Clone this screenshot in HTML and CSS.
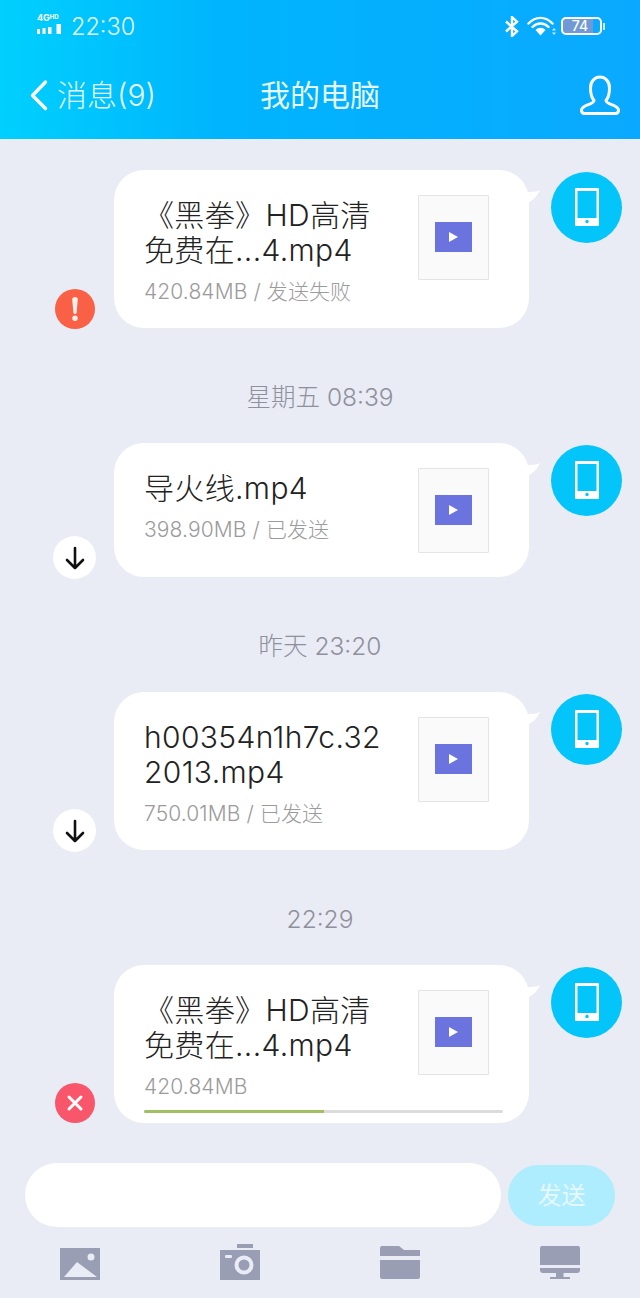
FILE: index.html
```html
<!DOCTYPE html>
<html lang="zh">
<head>
<meta charset="utf-8">
<title>我的电脑</title>
<link rel="stylesheet" href="styles.css">
</head>
<body>
<div class="app">
  <header class="header">
    <div class="statusbar">
      <div class="status-left">
        <div class="signal">
          <div class="net"><span class="net-4g">4G</span><span class="net-hd">HD</span></div>
          <svg class="bars" width="25" height="10" viewBox="0 0 25 10"><path fill="#fff" d="M0 5h3v5H0zM5.500 4h3v6h-3zM11 3h3.500v7H11zM19.500 0H24v10h-4.500z"/></svg>
        </div>
        <span class="clock">22:30</span>
      </div>
      <div class="status-right">
        <svg class="bt" width="14" height="21" viewBox="0 0 14 21"><path fill="none" stroke="#fff" stroke-width="2.400" d="M1 5.500l11 9.800L7 20V1l5 4.700L1 15.500"/></svg>
        <svg class="wifi" width="29" height="20" viewBox="0 0 29 20"><path fill="none" stroke="#fff" stroke-width="2.400" stroke-linecap="round" d="M1.500 7.500C8.500 0 18.500 0 25.500 7.500M5.500 11C10 6.300 17 6.300 21.500 11"/><path fill="#fff" d="M8.500 14c3-3 7-3 10 0l-5 5.500z"/><path fill="#fff" d="M27 12l2 2.500h-4zM27 19l-2-2.500h4z" opacity=".8"/></svg>
        <div class="battery"><div class="battery-body"><span class="battery-level">74</span></div><span class="battery-nub"></span></div>
      </div>
    </div>
    <nav class="navbar">
      <div class="nav-back">
        <svg width="20" height="32" viewBox="0 0 20 32"><path fill="none" stroke="#fff" stroke-width="3.400" stroke-linecap="round" stroke-linejoin="round" d="M15.500 3L2.500 16.500l13 13"/></svg>
        <span>消息(9)</span>
      </div>
      <div class="nav-title">我的电脑</div>
      <svg class="nav-user" width="40" height="40" viewBox="0 0 40 40"><path fill="none" stroke="#fff" stroke-width="3" stroke-linejoin="round" d="M14 25.500C11 22 10.500 17 10.500 13 10.500 6 15 2 20 2s9.500 4 9.500 11c0 4-.5 9-3.500 12.500 0 4 12.500 4.500 12.500 9.500 0 2-1 3.500-3 3.500H4.500c-2 0-3-1.500-3-3.500 0-5 12.500-5.500 12.500-9.500z"/></svg>
    </nav>
  </header>

  <main class="messages">
    <section class="row">
      <div class="status-slot"><div class="badge badge-alert"><svg width="6" height="24" viewBox="0 0 6 24"><path fill="#fff" opacity=".9" d="M.2 2.500a2.800 2.500 0 0 1 5.600 0L4.600 15.500a1.600 1.600 0 0 1-3.200 0zM3 18.500a2.700 2.700 0 1 0 0 5.400 2.700 2.700 0 0 0 0-5.400z"/></svg></div></div>
      <article class="bubble">
        <div class="bubble-main">
          <div class="file-text">
            <div class="file-name">《黑拳》HD高清<br>免费在...4.mp4</div>
            <div class="file-meta">420.84MB / 发送失败</div>
          </div>
          <div class="thumb"><div class="thumb-play"></div></div>
        </div>
        <svg class="tail" width="14" height="16" viewBox="0 0 14 16"><path fill="#fff" d="M0 3c4 0 9 0 13-2C11 6 6 12 0 14z"/></svg>
      </article>
      <div class="avatar"><svg width="24" height="38" viewBox="0 0 24 38"><path fill="#fff" fill-rule="evenodd" d="M1 0h22a1 1 0 0 1 1 1v36a1 1 0 0 1-1 1H1a1 1 0 0 1-1-1V1a1 1 0 0 1 1-1zm1.500 3v27h19V3zM12 31.800a1.700 1.700 0 1 0 0 3.400 1.700 1.700 0 0 0 0-3.400z"/></svg></div>
    </section>

    <div class="time">星期五 08:39</div>

    <section class="row">
      <div class="status-slot"><div class="badge badge-down"><svg width="22" height="24" viewBox="0 0 22 24"><path fill="none" stroke="#111" stroke-width="2.600" stroke-linecap="round" stroke-linejoin="round" d="M11 2v20M3 14l8 8 8-8"/></svg></div></div>
      <article class="bubble">
        <div class="bubble-main">
          <div class="file-text">
            <div class="file-name">导火线.mp4</div>
            <div class="file-meta">398.90MB / 已发送</div>
          </div>
          <div class="thumb"><div class="thumb-play"></div></div>
        </div>
        <svg class="tail" width="14" height="16" viewBox="0 0 14 16"><path fill="#fff" d="M0 3c4 0 9 0 13-2C11 6 6 12 0 14z"/></svg>
      </article>
      <div class="avatar"><svg width="24" height="38" viewBox="0 0 24 38"><path fill="#fff" fill-rule="evenodd" d="M1 0h22a1 1 0 0 1 1 1v36a1 1 0 0 1-1 1H1a1 1 0 0 1-1-1V1a1 1 0 0 1 1-1zm1.500 3v27h19V3zM12 31.800a1.700 1.700 0 1 0 0 3.400 1.700 1.700 0 0 0 0-3.400z"/></svg></div>
    </section>

    <div class="time">昨天 23:20</div>

    <section class="row">
      <div class="status-slot"><div class="badge badge-down"><svg width="22" height="24" viewBox="0 0 22 24"><path fill="none" stroke="#111" stroke-width="2.600" stroke-linecap="round" stroke-linejoin="round" d="M11 2v20M3 14l8 8 8-8"/></svg></div></div>
      <article class="bubble">
        <div class="bubble-main">
          <div class="file-text">
            <div class="file-name">h00354n1h7c.32<br>2013.mp4</div>
            <div class="file-meta">750.01MB / 已发送</div>
          </div>
          <div class="thumb"><div class="thumb-play"></div></div>
        </div>
        <svg class="tail" width="14" height="16" viewBox="0 0 14 16"><path fill="#fff" d="M0 3c4 0 9 0 13-2C11 6 6 12 0 14z"/></svg>
      </article>
      <div class="avatar"><svg width="24" height="38" viewBox="0 0 24 38"><path fill="#fff" fill-rule="evenodd" d="M1 0h22a1 1 0 0 1 1 1v36a1 1 0 0 1-1 1H1a1 1 0 0 1-1-1V1a1 1 0 0 1 1-1zm1.500 3v27h19V3zM12 31.800a1.700 1.700 0 1 0 0 3.400 1.700 1.700 0 0 0 0-3.400z"/></svg></div>
    </section>

    <div class="time">22:29</div>

    <section class="row">
      <div class="status-slot"><div class="badge badge-cancel"><svg width="18" height="18" viewBox="0 0 18 18"><path fill="none" stroke="#fff" stroke-width="3" stroke-linecap="round" d="M3 3l12 12M15 3L3 15"/></svg></div></div>
      <article class="bubble bubble-progress">
        <div class="bubble-main">
          <div class="file-text">
            <div class="file-name">《黑拳》HD高清<br>免费在...4.mp4</div>
            <div class="file-meta">420.84MB</div>
          </div>
          <div class="thumb"><div class="thumb-play"></div></div>
        </div>
        <div class="progress"><div class="progress-fill" style="width:50%"></div></div>
        <svg class="tail" width="14" height="16" viewBox="0 0 14 16"><path fill="#fff" d="M0 3c4 0 9 0 13-2C11 6 6 12 0 14z"/></svg>
      </article>
      <div class="avatar"><svg width="24" height="38" viewBox="0 0 24 38"><path fill="#fff" fill-rule="evenodd" d="M1 0h22a1 1 0 0 1 1 1v36a1 1 0 0 1-1 1H1a1 1 0 0 1-1-1V1a1 1 0 0 1 1-1zm1.500 3v27h19V3zM12 31.800a1.700 1.700 0 1 0 0 3.400 1.700 1.700 0 0 0 0-3.400z"/></svg></div>
    </section>
  </main>

  <div class="composer">
    <div class="composer-input"></div>
    <div class="composer-send">发送</div>
  </div>

  <div class="toolbar">
    <svg width="40" height="34" viewBox="0 0 40 34"><path fill="#9a9eb4" d="M0 2h40v32H0z"/><circle cx="31" cy="11" r="3.500" fill="#e9ebf5"/><path fill="#e9ebf5" d="M4 31l13-15 20 15z"/></svg>
    <svg width="40" height="36" viewBox="0 0 40 36"><path fill="#9a9eb4" d="M17 0h16v4H17zM0 6h40v30H0z"/><rect x="5" y="11" width="7" height="3" rx="1" fill="#e9ebf5"/><circle cx="24" cy="21" r="7.500" fill="#9a9eb4" stroke="#e9ebf5" stroke-width="4"/></svg>
    <svg width="40" height="34" viewBox="0 0 40 34"><path fill="#9a9eb4" d="M0 2a2 2 0 0 1 2-2h17l5 4h16v6H0zM0 14h40v17a2 2 0 0 1-2 2H2a2 2 0 0 1-2-2z"/></svg>
    <svg width="40" height="34" viewBox="0 0 40 34"><path fill="#9a9eb4" d="M2 0h36a2 2 0 0 1 2 2v17H0V2a2 2 0 0 1 2-2zM0 22h40v2a3 3 0 0 1-3 3H23.500v4H30v2H10v-2h6v-4H3a3 3 0 0 1-3-3z"/></svg>
  </div>
</div>
</body>
</html>
```
FILE: styles.css
```css
* { box-sizing: border-box; }
html, body { margin: 0; padding: 0; }
body {
  width: 640px;
  height: 1298px;
  overflow: hidden;
  background: #e9ebf5;
  font-family: Inter, "Noto Sans CJK SC", "Liberation Sans", sans-serif;
}
.app { display: flex; flex-direction: column; height: 1298px; }

.header {
  height: 139px;
  padding: 12px 20px 0 30px;
  background: linear-gradient(90deg, #00d0fd 0%, #00b4fd 35%, #0aa9ff 100%);
  color: rgba(255, 255, 255, .92);
}
.statusbar { display: flex; justify-content: space-between; align-items: center; height: 28px; padding-left: 7px; }
.status-left { display: flex; align-items: center; gap: 9px; }
.signal { display: flex; flex-direction: column; width: 25px; margin-top: -6px; }
.net { display: flex; height: 11px; line-height: 10px; font-weight: 700; color: #fff; }
.net-4g { font-size: 9px; }
.net-hd { font-size: 6px; line-height: 7px; }
.bars { display: block; }
.clock { font-size: 23.500px; font-weight: 300; line-height: 28px; margin-top: 2px; }
.status-right { display: flex; align-items: center; padding-right: 15px; }
.bt { margin-right: 8px; }
.wifi { margin-right: 5px; }
.battery { display: flex; align-items: center; gap: 1px; }
.battery-body {
  width: 41px;
  height: 18px;
  border: 2px solid #fff;
  border-radius: 5px;
  background: linear-gradient(90deg, #7099d6 0 82%, transparent 82%);
  display: flex;
  align-items: center;
  justify-content: center;
}
.battery-level { font-size: 14px; line-height: 14px; font-weight: 500; padding-right: 3px; color: #fff; }
.battery-nub { width: 2px; height: 7px; background: #fff; opacity: .8; }

.navbar { position: relative; display: flex; align-items: center; justify-content: space-between; height: 40px; margin-top: 35px; }
.nav-back { display: flex; align-items: center; gap: 7px; font-size: 30px; font-weight: 300; line-height: 40px; }
.nav-title { position: absolute; left: 0; right: 10px; text-align: center; font-size: 30px; line-height: 40px; }
.nav-user { display: block; }

.messages { padding-top: 31px; }
.row { display: flex; padding: 0 18px 0 53px; }
.status-slot { display: flex; width: 43px; margin-right: 18px; align-items: flex-end; justify-content: center; }
.badge {
  display: flex;
  align-items: center;
  justify-content: center;
  width: 40px;
  height: 40px;
  border-radius: 50%;
  margin-bottom: -1px;
  flex: none;
}
.badge-alert { background: #fa6045; }
.badge-down { width: 43px; height: 43px; background: #fff; margin-bottom: -2px; }
.badge-cancel { background: #f7566b; margin-bottom: 0; }

.bubble {
  position: relative;
  width: 415px;
  padding: 25px 40px 24px 30px;
  background: #fff;
  border-radius: 30px;
}
.bubble-progress { padding-bottom: 10px; }
.bubble-main { display: flex; justify-content: space-between; }
.file-text { padding-top: 3px; width: 250px; }
.file-name { font-size: 30px; line-height: 35px; color: #222; font-weight: 300; letter-spacing: .35px; }
.file-meta { margin-top: 11px; font-size: 21px; line-height: 25px; color: #9b9b9b; font-weight: 300; letter-spacing: .1px; }
.thumb {
  display: flex;
  flex: none;
  align-items: center;
  justify-content: center;
  align-self: flex-start;
  width: 71px;
  height: 85px;
  background: #fafafa;
  border: 1px solid #e4e4e4;
  border-radius: 1px;
  padding-bottom: 2px;
}
.thumb-play { position: relative; width: 37px; height: 30px; background: #6b74de; }
.thumb-play::after {
  content: "";
  position: absolute;
  left: 14px;
  top: 10px;
  border-left: 9px solid #fff;
  border-top: 5.500px solid transparent;
  border-bottom: 5.500px solid transparent;
}
.tail { position: absolute; right: -12px; top: 19px; }

.progress { height: 3px; margin: 11px -14px 0 0; background: #dcdcdc; border-radius: 2px; overflow: hidden; }
.progress-fill { height: 100%; background: #a1c063; }

.avatar {
  display: flex;
  flex: none;
  align-items: center;
  justify-content: center;
  align-self: flex-start;
  width: 71px;
  height: 71px;
  margin: 1.500px 0 0 22px;
  border-radius: 50%;
  background: #03c5fa;
}

.time { padding: 54.500px 0 32.500px; text-align: center; font-size: 24.500px; line-height: 28px; color: #8e909c; font-weight: 300; }

.composer { display: flex; align-items: center; padding: 40px 25px 0; gap: 7px; }
.composer-input { width: 476px; height: 64px; border-radius: 32px; background: #fff; }
.composer-send {
  width: 107px;
  height: 61px;
  border-radius: 31px;
  background: #adedfd;
  color: #e6f8fe;
  font-size: 24px;
  line-height: 61px;
  text-align: center;
}

.toolbar { display: grid; grid-template-columns: repeat(4, 160px); justify-items: center; align-items: start; height: 36px; margin-top: 17px; }
.toolbar svg { display: block; margin-top: 2px; }
.toolbar svg:nth-child(2) { margin-top: 0; }
```
